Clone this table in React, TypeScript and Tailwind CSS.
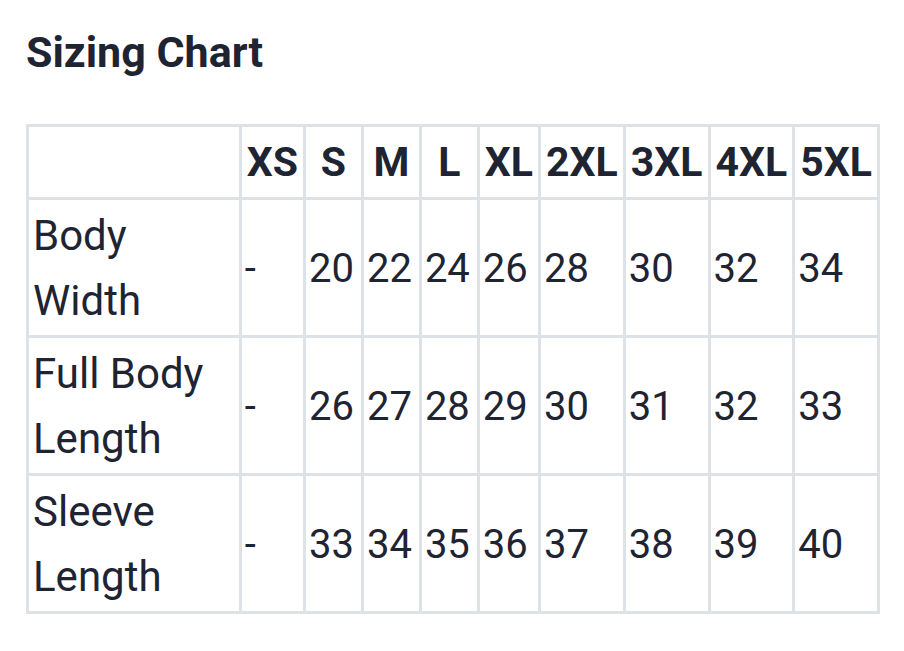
import React from "react";

const sizes = ["XS", "S", "M", "L", "XL", "2XL", "3XL", "4XL", "5XL"];
const rows: { label: string; values: string[] }[] = [
  { label: "Body Width", values: ["-", "20", "22", "24", "26", "28", "30", "32", "34"] },
  { label: "Full Body Length", values: ["-", "26", "27", "28", "29", "30", "31", "32", "33"] },
  { label: "Sleeve Length", values: ["-", "33", "34", "35", "36", "37", "38", "39", "40"] },
];

export default function App() {
  return (
    <div
      className="min-h-[651px] w-[904px] bg-white pl-[26px] pr-[24px] pt-[31px] text-[#1f2433]"
      style={{ fontFamily: "Roboto, 'Noto Sans', sans-serif" }}
    >
      <h2 className="text-[43px] font-bold leading-none">Sizing Chart</h2>
      <table className="mt-[50px] w-full border-collapse border-[3px] border-[#dde2e7] leading-[65px]">
        <thead>
          <tr>
            <th className="border-[3px] border-[#dde2e7] px-[6px] pb-[2px] pt-[3px]"></th>
            {sizes.map((s) => (
              <th
                key={s}
                className="border-[3px] border-[#dde2e7] px-[5px] pb-[2px] pt-[3px] text-center text-[41px] font-bold"
              >
                {s}
              </th>
            ))}
          </tr>
        </thead>
        <tbody>
          {rows.map((r) => (
            <tr key={r.label}>
              <td className="border-[3px] border-[#dde2e7] pl-[4px] pr-[8px] pb-[2px] pt-[3px] text-left align-middle text-[42px]">
                {r.label}
              </td>
              {r.values.map((v, i) => (
                <td
                  key={i}
                  className="border-[3px] border-[#dde2e7] pl-[3px] pr-[7px] pb-[2px] pt-[3px] text-left align-middle text-[40px]"
                >
                  {v}
                </td>
              ))}
            </tr>
          ))}
        </tbody>
      </table>
    </div>
  );
}
